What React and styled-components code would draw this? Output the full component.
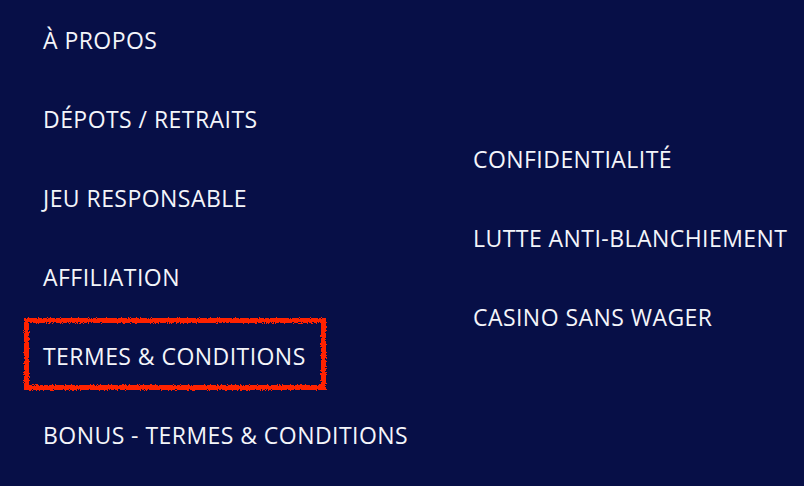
import styled, { createGlobalStyle } from 'styled-components';

const left = [
    { label: 'À PROPOS' },
    { label: 'DÉPOTS / RETRAITS' },
    { label: 'JEU RESPONSABLE' },
    { label: 'AFFILIATION' },
    { label: 'TERMES & CONDITIONS', marked: true },
    { label: 'BONUS - TERMES & CONDITIONS' },
];

const right = [
    { label: 'CONFIDENTIALITÉ' },
    { label: 'LUTTE ANTI-BLANCHIEMENT' },
    { label: 'CASINO SANS WAGER' },
];

export default function App(){
    return(
        <>
            <Global />
            <Filters aria-hidden="true">
                <filter id="rough">
                    <feTurbulence type="fractalNoise" baseFrequency="0.9" numOctaves="2" seed="3" />
                    <feDisplacementMap in="SourceGraphic" scale="4" />
                </filter>
            </Filters>
            <Footer>
                <Column>
                    {
                        left.map((e)=>(
                            <Item key={ e.label } $marked={ e.marked }>
                                <Link href="#">{ e.label }</Link>
                            </Item>
                        ))
                    }
                </Column>
                <Column $offset>
                    {
                        right.map((e)=>(
                            <Item key={ e.label }>
                                <Link href="#">{ e.label }</Link>
                            </Item>
                        ))
                    }
                </Column>
            </Footer>
        </>
    );
}

const Global = createGlobalStyle`
    html, body{
        margin: 0;
        padding: 0;
        background-color: #070f47;
    }
`;

const Filters = styled.svg`
    width: 0;
    height: 0;
    position: absolute;
`;

const Footer = styled.nav`
    width: 804px;
    height: 486px;
    background-color: #070f47;
    display: grid;
    grid-template-columns: 430px 1fr;
    padding-left: 43px;
    box-sizing: border-box;
    overflow: hidden;
`;

const Column = styled.ul`
    list-style: none;
    margin: 0;
    padding: 0;
    padding-top: ${ ({ $offset })=> $offset ? '119px' : '0' };
    display: flex;
    flex-direction: column;
`;

const Item = styled.li`
    height: 79px;
    flex-shrink: 0;
    display: flex;
    align-items: center;
    position: relative;

    ${ ({ $marked })=> $marked && `
        &::after{
            content: "";
            position: absolute;
            left: -19px;
            width: 302px;
            top: 2px;
            bottom: 5px;
            border: 5px solid #ff2200;
            box-sizing: border-box;
            filter: url(#rough);
        }
    ` }
`;

const Link = styled.a`
    font-family: "Open Sans", "DejaVu Sans", sans-serif;
    font-size: 23px;
    color: #f4f5fa;
    text-decoration: none;
    white-space: nowrap;
    letter-spacing: 0.45px;
`;
